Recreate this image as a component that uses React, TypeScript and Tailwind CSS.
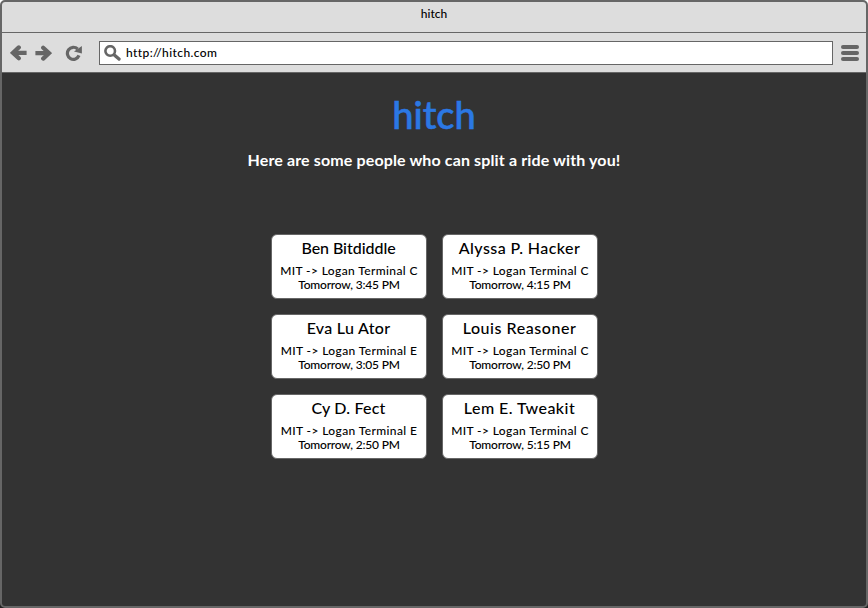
import React from "react";

type Rider = { name: string; nameClass: string; terminal: string; time: string };

const riders: Rider[] = [
  { name: "Ben Bitdiddle", nameClass: "tracking-[-0.05px]", terminal: "C", time: "3:45" },
  { name: "Alyssa P. Hacker", nameClass: "tracking-[0.43px]", terminal: "C", time: "4:15" },
  { name: "Eva Lu Ator", nameClass: "tracking-[0.3px]", terminal: "E", time: "3:05" },
  { name: "Louis Reasoner", nameClass: "tracking-[0.55px]", terminal: "C", time: "2:50" },
  { name: "Cy D. Fect", nameClass: "tracking-[0.2px]", terminal: "E", time: "2:50" },
  { name: "Lem E. Tweakit", nameClass: "tracking-[0.45px]", terminal: "C", time: "5:15" },
];

function ArrowIcon({ className = "" }: { className?: string }) {
  return (
    <svg className={className} width="17" height="16" viewBox="0 0 17 16" fill="none" stroke="#666" strokeWidth="4.2">
      <path d="M16.6 7.8H4" />
      <path d="M8.8 2.4L3 7.8l5.8 5.4" strokeLinecap="round" strokeLinejoin="miter" />
    </svg>
  );
}

function ReloadIcon() {
  return (
    <svg width="17" height="16" viewBox="0 0 17 16" className="ml-[13px]">
      <path d="M12.6 4A6 6 0 1 0 14 10.4" fill="none" stroke="#666" strokeWidth="3.2" />
      <path d="M16.9 1v7.6L9 6.6z" fill="#666" />
    </svg>
  );
}

function SearchIcon() {
  return (
    <svg width="17" height="16" viewBox="0 0 17 16" fill="none" stroke="#666">
      <circle cx="6.2" cy="6" r="4.8" strokeWidth="2.6" />
      <path d="M10 9.8l5 4.3" strokeWidth="3.3" strokeLinecap="round" />
    </svg>
  );
}

function RiderCard({ name, nameClass, terminal, time }: Rider) {
  return (
    <div className="flex h-[65px] flex-col items-center rounded-[6px] border border-[#666] bg-white whitespace-nowrap text-black">
      <div className={`mt-[3px] text-[16px] leading-5 font-medium ${nameClass}`}>{name}</div>
      <div className="mt-[6px] pl-px text-[12px] leading-[14px] font-medium tracking-[0.38px]">MIT -&gt; Logan Terminal {terminal}</div>
      <div className="pl-px text-[12px] leading-[14px] font-medium tracking-[-0.2px]">Tomorrow, {time} PM</div>
    </div>
  );
}

export default function App() {
  return (
    <div className="h-[608px] w-[868px] bg-[linear-gradient(#fff_50%,#222_50%)] font-['Lato','Open_Sans',sans-serif]">
      <div className="flex h-full flex-col overflow-hidden rounded-[5px] border-2 border-[#666] bg-[#333]">
        <header className="flex h-[31px] shrink-0 justify-center border-b border-[#666] bg-[#ddd] pt-[3px] text-[12px] leading-[18px] font-medium text-black">
          <span>hitch</span>
        </header>
        <nav className="flex h-10 shrink-0 items-center border-b border-[#666] bg-[#ddd] pr-[7px] pl-2">
          <ArrowIcon />
          <ArrowIcon className="ml-2 rotate-180" />
          <ReloadIcon />
          <div className="ml-[17px] flex h-6 w-[734px] items-center border border-[#666] bg-white pl-1">
            <SearchIcon />
            <span className="ml-[5px] text-[12px] leading-[18px] font-medium tracking-[0.4px] text-black">http://hitch.com</span>
          </div>
          <div className="ml-auto flex w-[18px] flex-col gap-[2px]">
            <i className="h-1 rounded-full bg-[#666]" />
            <i className="h-1 rounded-full bg-[#666]" />
            <i className="h-1 rounded-full bg-[#666]" />
          </div>
        </nav>
        <main className="flex grow flex-col items-center">
          <h1 className="mt-[17px] text-[38px] leading-[48px] font-medium text-[#2b78e4] [-webkit-text-stroke:0.6px_#2b78e4]">hitch</h1>
          <p className="mt-[10px] text-[16px] leading-6 font-bold tracking-[0.13px] text-white">Here are some people who can split a ride with you!</p>
          <section className="mt-[62px] grid grid-cols-[156px_156px] gap-x-[15px] gap-y-[15px]">
            {riders.map((rider) => (
              <RiderCard key={rider.name} {...rider} />
            ))}
          </section>
        </main>
      </div>
    </div>
  );
}
